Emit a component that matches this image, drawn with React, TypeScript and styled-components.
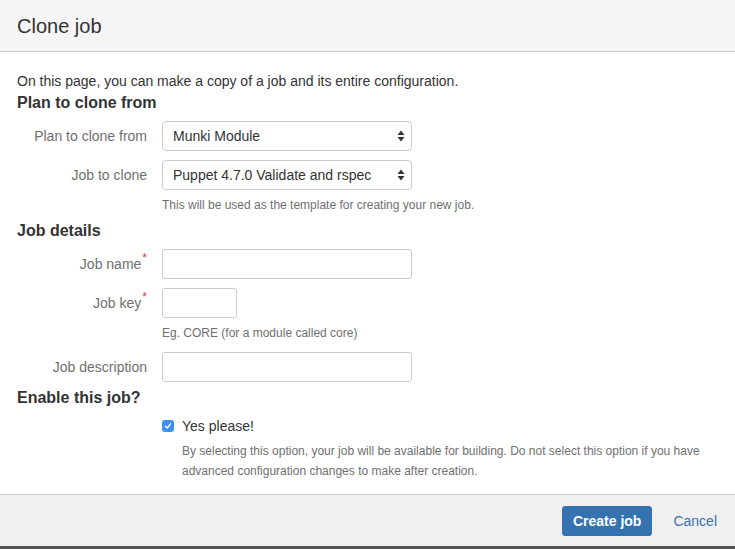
import styled, { createGlobalStyle } from 'styled-components';

const GlobalStyle = createGlobalStyle`
  html, body {
    margin: 0;
    padding: 0;
    background: #ffffff;
  }
  body {
    font-family: 'Liberation Sans', Arial, sans-serif;
    color: #333333;
  }
`;

const Dialog = styled.div`
  display: flex;
  flex-direction: column;
  width: 735px;
  height: 549px;
  background: #ffffff;
`;

const Header = styled.header`
  display: flex;
  align-items: center;
  height: 51px;
  padding: 0 17px;
  background: #f5f5f5;
  border-bottom: 1px solid #cccccc;
`;

const Title = styled.h2`
  margin: 0;
  font-size: 20px;
  font-weight: normal;
  line-height: 24px;
  color: #333333;
`;

const Content = styled.div`
  flex: 1;
  padding: 19px 17px 0;
`;

const Intro = styled.p`
  margin: 0;
  font-size: 14px;
  line-height: 20px;
`;

const SectionTitle = styled.h3<{ $top?: number }>`
  margin: ${(p) => p.$top ?? 1}px 0 4px;
  font-size: 16px;
  font-weight: bold;
  line-height: 20px;
  color: #333333;
`;

// label column + field column, like an aui field-group
const FieldGroup = styled.div`
  display: grid;
  grid-template-columns: 130px 1fr;
  column-gap: 15px;
  row-gap: 5px;
  padding: 4px 0 5px;
`;

const Label = styled.label`
  line-height: 30px;
  text-align: right;
  font-size: 14px;
  color: #707070;
`;

const Required = styled.span`
  position: relative;
  top: -7px;
  margin-left: 1px;
  font-size: 12px;
  line-height: 1;
  color: #d04437;
`;

const SelectBox = styled.div`
  display: flex;
  align-items: center;
  justify-content: space-between;
  box-sizing: border-box;
  width: 250px;
  height: 30px;
  padding: 0 6px 0 10px;
  border: 1px solid #cccccc;
  border-radius: 4px;
  background: #ffffff;
  font-size: 14px;
  color: #333333;
`;

const TextInput = styled.input<{ $width?: number }>`
  display: block;
  box-sizing: border-box;
  width: ${(p) => p.$width ?? 250}px;
  height: 30px;
  margin: 0;
  padding: 0 8px;
  border: 1px solid #cccccc;
  border-radius: 3px;
  background: #ffffff;
  font: inherit;
  font-size: 14px;
  outline: none;
`;

const Description = styled.div`
  grid-column: 2;
  font-size: 12px;
  line-height: 20px;
  color: #707070;
`;

const CheckGroup = styled.div`
  display: flex;
  flex-direction: column;
  gap: 5px;
  padding: 4px 0 5px 145px;
`;

const CheckRow = styled.label`
  display: flex;
  align-items: center;
  gap: 8px;
  height: 20px;
  font-size: 14px;
  color: #333333;
`;

const CheckBox = styled.span`
  display: inline-flex;
  align-items: center;
  justify-content: center;
  width: 12px;
  height: 12px;
  border-radius: 3px;
  background: #3d8ef7;
`;

const CheckDescription = styled.div`
  width: 530px;
  padding-left: 20px;
  font-size: 12px;
  line-height: 20px;
  color: #707070;
`;

const Footer = styled.footer`
  display: flex;
  align-items: center;
  justify-content: flex-end;
  gap: 21px;
  height: 51px;
  padding: 0 18px 0 17px;
  background: #f0f0f0;
  border-top: 1px solid #cccccc;
  border-bottom: 3px solid #555555;
`;

const PrimaryButton = styled.button`
  height: 30px;
  padding: 0 10px;
  border: 1px solid #3572b0;
  border-radius: 3px;
  background: #3572b0;
  color: #ffffff;
  font-family: inherit;
  font-size: 14px;
  font-weight: bold;
  cursor: pointer;
`;

const CancelLink = styled.a`
  font-size: 14px;
  color: #3572b0;
  text-decoration: none;
  cursor: pointer;
`;

const SelectArrows = () => (
  <svg width="8" height="12" viewBox="0 0 8 12">
    <path d="M4 0.5 L7.5 5 L0.5 5 Z" fill="#333" />
    <path d="M4 11.5 L7.5 7 L0.5 7 Z" fill="#333" />
  </svg>
);

const App = () => {
  return (
    <>
      <GlobalStyle />
      <Dialog>
        <Header>
          <Title>Clone job</Title>
        </Header>
        <Content>
          <Intro>On this page, you can make a copy of a job and its entire configuration.</Intro>
          <SectionTitle $top={2}>Plan to clone from</SectionTitle>
          <FieldGroup>
            <Label>Plan to clone from</Label>
            <SelectBox>
              Munki Module
              <SelectArrows />
            </SelectBox>
          </FieldGroup>
          <FieldGroup>
            <Label>Job to clone</Label>
            <SelectBox>
              Puppet 4.7.0 Validate and rspec
              <SelectArrows />
            </SelectBox>
            <Description>This will be used as the template for creating your new job.</Description>
          </FieldGroup>

          <SectionTitle>Job details</SectionTitle>
          <FieldGroup>
            <Label>
              Job name<Required>*</Required>
            </Label>
            <TextInput />
          </FieldGroup>
          <FieldGroup>
            <Label>
              Job key<Required>*</Required>
            </Label>
            <TextInput $width={75} />
            <Description>Eg. CORE (for a module called core)</Description>
          </FieldGroup>
          <FieldGroup>
            <Label>Job description</Label>
            <TextInput />
          </FieldGroup>

          <SectionTitle>Enable this job?</SectionTitle>
          <CheckGroup>
            <CheckRow>
              <CheckBox>
                <svg width="8" height="8" viewBox="0 0 8 8">
                  <path d="M1.5 4.2 L3.3 6 L6.5 1.8" stroke="#fff" strokeWidth="1.4" fill="none" strokeLinecap="round" strokeLinejoin="round" />
                </svg>
              </CheckBox>
              Yes please!
            </CheckRow>
            <CheckDescription>
              By selecting this option, your job will be available for building. Do not select this option if you have
              advanced configuration changes to make after creation.
            </CheckDescription>
          </CheckGroup>
        </Content>
        <Footer>
          <PrimaryButton>Create job</PrimaryButton>
          <CancelLink>Cancel</CancelLink>
        </Footer>
      </Dialog>
    </>
  );
};

export default App;
